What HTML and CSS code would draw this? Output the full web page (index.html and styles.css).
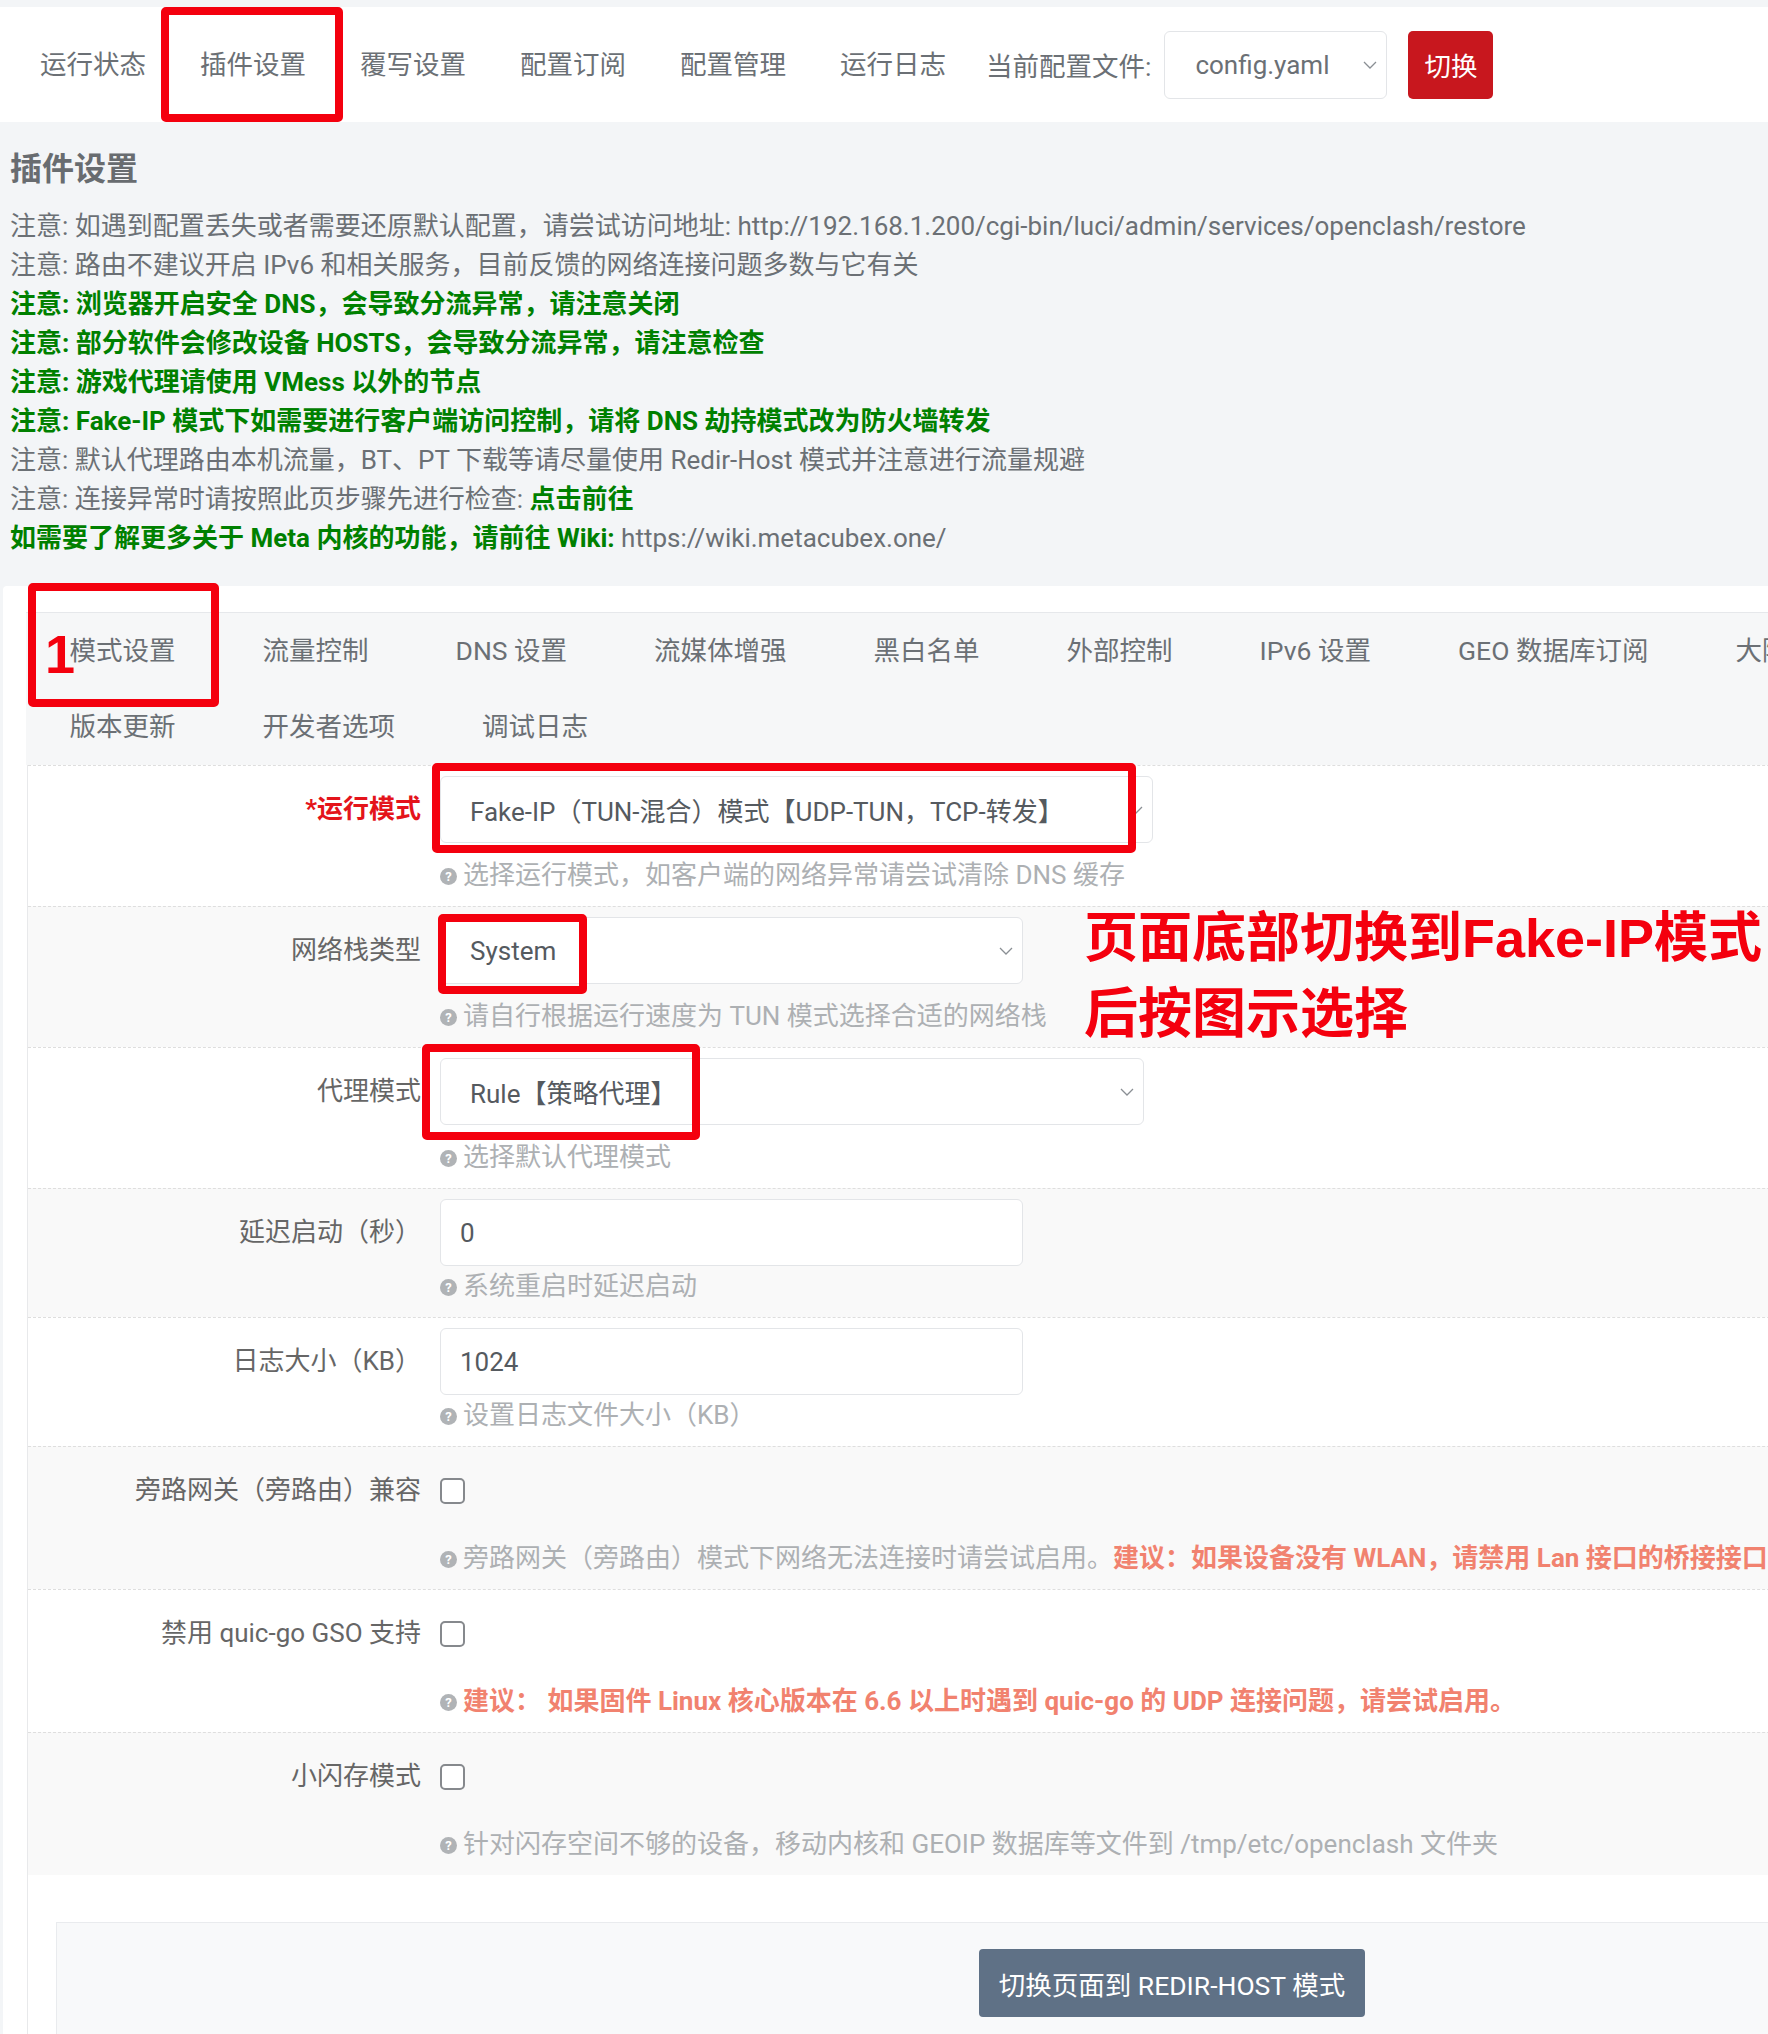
FILE: index.html
```html
<!DOCTYPE html>
<html lang="zh-CN">
<head>
    <meta charset="UTF-8">
    <title>OpenClash - 插件设置</title>
    <link rel="stylesheet" href="styles.css">
</head>
<body>
<div class="screen">
    <nav class="top-nav">
        <a>运行状态</a>
        <a class="active">插件设置</a>
        <a>覆写设置</a>
        <a>配置订阅</a>
        <a>配置管理</a>
        <a>运行日志</a>
        <span class="cfg-label">当前配置文件:</span>
        <div class="select cfg-select">
            <span>config.yaml</span>
            <svg width="14" height="8" viewBox="0 0 14 8"><path d="M1 1l6 6 6-6" fill="none" stroke="#8a8f94" stroke-width="1.3"/></svg>
        </div>
        <button class="btn-switch">切换</button>
    </nav>

    <div class="page">
        <h2>插件设置</h2>
        <div class="notes">
            <p>注意: 如遇到配置丢失或者需要还原默认配置，请尝试访问地址: http://192.168.1.200/cgi-bin/luci/admin/services/openclash/restore</p>
            <p>注意: 路由不建议开启 IPv6 和相关服务，目前反馈的网络连接问题多数与它有关</p>
            <p class="green">注意: 浏览器开启安全 DNS，会导致分流异常，请注意关闭</p>
            <p class="green">注意: 部分软件会修改设备 HOSTS，会导致分流异常，请注意检查</p>
            <p class="green">注意: 游戏代理请使用 VMess 以外的节点</p>
            <p class="green">注意: Fake-IP 模式下如需要进行客户端访问控制，请将 DNS 劫持模式改为防火墙转发</p>
            <p>注意: 默认代理路由本机流量，BT、PT 下载等请尽量使用 Redir-Host 模式并注意进行流量规避</p>
            <p>注意: 连接异常时请按照此页步骤先进行检查: <b class="green">点击前往</b></p>
            <p><b class="green">如需要了解更多关于 Meta 内核的功能，请前往 Wiki:</b> https://wiki.metacubex.one/</p>
        </div>
    </div>

    <div class="panel">
        <ul class="tabs">
            <li class="active">模式设置</li>
            <li>流量控制</li>
            <li>DNS 设置</li>
            <li>流媒体增强</li>
            <li>黑白名单</li>
            <li>外部控制</li>
            <li>IPv6 设置</li>
            <li>GEO 数据库订阅</li>
            <li>大陆白名单订阅</li>
            <li>版本更新</li>
            <li>开发者选项</li>
            <li>调试日志</li>
        </ul>

        <div class="form">
            <div class="row row-select">
                <label class="required">*运行模式</label>
                <div class="select w-long">
                    <span>Fake-IP（TUN-混合）模式【UDP-TUN，TCP-转发】</span>
                    <svg width="14" height="8" viewBox="0 0 14 8"><path d="M1 1l6 6 6-6" fill="none" stroke="#8a8f94" stroke-width="1.3"/></svg>
                </div>
                <div class="help"><i>?</i>选择运行模式，如客户端的网络异常请尝试清除 DNS 缓存</div>
            </div>
            <div class="row row-select">
                <label>网络栈类型</label>
                <div class="select w-mid">
                    <span>System</span>
                    <svg width="14" height="8" viewBox="0 0 14 8"><path d="M1 1l6 6 6-6" fill="none" stroke="#8a8f94" stroke-width="1.3"/></svg>
                </div>
                <div class="help"><i>?</i>请自行根据运行速度为 TUN 模式选择合适的网络栈</div>
            </div>
            <div class="row row-select">
                <label>代理模式</label>
                <div class="select w-rule">
                    <span>Rule【策略代理】</span>
                    <svg width="14" height="8" viewBox="0 0 14 8"><path d="M1 1l6 6 6-6" fill="none" stroke="#8a8f94" stroke-width="1.3"/></svg>
                </div>
                <div class="help"><i>?</i>选择默认代理模式</div>
            </div>
            <div class="row row-input">
                <label>延迟启动（秒）</label>
                <input class="text" value="0">
                <div class="help"><i>?</i>系统重启时延迟启动</div>
            </div>
            <div class="row row-input">
                <label>日志大小（KB）</label>
                <input class="text" value="1024">
                <div class="help"><i>?</i>设置日志文件大小（KB）</div>
            </div>
            <div class="row row-check">
                <label>旁路网关（旁路由）兼容</label>
                <div class="check-wrap"><input type="checkbox"></div>
                <div class="help"><i>?</i>旁路网关（旁路由）模式下网络无法连接时请尝试启用。<b>建议：如果设备没有 WLAN，请禁用 Lan 接口的桥接接口</b></div>
            </div>
            <div class="row row-check">
                <label>禁用 quic-go GSO 支持</label>
                <div class="check-wrap"><input type="checkbox"></div>
                <div class="help"><i>?</i><b>建议： 如果固件 Linux 核心版本在 6.6 以上时遇到 quic-go 的 UDP 连接问题，请尝试启用。</b></div>
            </div>
            <div class="row row-check">
                <label>小闪存模式</label>
                <div class="check-wrap"><input type="checkbox"></div>
                <div class="help"><i>?</i>针对闪存空间不够的设备，移动内核和 GEOIP 数据库等文件到 /tmp/etc/openclash 文件夹</div>
            </div>

            <div class="actions">
                <button class="btn-mode">切换页面到 REDIR-HOST 模式</button>
            </div>
        </div>
    </div>

    <!-- 标注 -->
    <div class="mark mark-nav"></div>
    <div class="mark mark-tab"></div>
    <div class="mark-num">1</div>
    <div class="mark mark-mode"></div>
    <div class="mark mark-stack"></div>
    <div class="mark mark-proxy"></div>
    <div class="mark-text">页面底部切换到Fake-IP模式<br>后按图示选择</div>
</div>
</body>
</html>
```

FILE: styles.css
```css
html, body {
    margin: 0;
    overflow: hidden;
    background: #f3f5f7;
}

body {
    font-family: Roboto, "Noto Sans CJK SC", sans-serif;
    font-size: 26px;
    color: #6b7075;
}

.screen {
    position: relative;
    width: 2060px;
    padding-bottom: 40px;
}

/* top nav */
.top-nav {
    display: flex;
    align-items: center;
    margin-top: 7px;
    height: 115px;
    padding-left: 13px;
    background: #fff;
    font-size: 26.5px;
}

.top-nav a {
    padding: 0 27px;
    line-height: 40px;
}

.cfg-label {
    margin-left: 13px;
}

.select {
    display: flex;
    align-items: center;
    justify-content: space-between;
    box-sizing: border-box;
    height: 67px;
    padding: 0 9px 0 29px;
    background: #fff;
    border: 1px solid #e3e5e8;
    border-radius: 6px;
    color: #555a5f;
}

.cfg-select {
    width: 223px;
    height: 68px;
    margin-left: 13px;
    padding-left: 30px;
    color: #6b7075;
    font-size: 26px;
}

.btn-switch {
    margin-left: 21px;
    width: 85px;
    height: 68px;
    border: 0;
    border-radius: 5px;
    background: #c8171e;
    color: #fff;
    font: inherit;
}

/* header + notes */
.page {
    padding: 0 10px;
}

.page h2 {
    margin: 27px 0 0;
    font-size: 32px;
    line-height: 40px;
    font-weight: 700;
    color: #686c70;
}

.notes {
    margin-top: 18px;
}

.notes p {
    margin: 0;
    line-height: 39px;
    white-space: nowrap;
}

.green {
    color: #008000;
    font-weight: 700;
}

/* panel */
.panel {
    margin: 28px 0 0 3px;
    padding-top: 26px;
    background: #fff;
    border-radius: 4px 0 0 0;
}

.tabs {
    display: flex;
    flex-wrap: wrap;
    margin: 0 0 0 23px;
    padding: 0;
    list-style: none;
    background: #f6f7f8;
    border-top: 1px solid #e6e8eb;
    font-size: 26.5px;
}

.tabs li {
    padding: 0 43.5px;
    line-height: 76px;
    white-space: nowrap;
}

.form {
    margin-left: 24px;
    border-left: 1px solid #e8e9eb;
}

.row {
    display: grid;
    grid-template-columns: 393px 1fr;
    column-gap: 19px;
    padding: 10px 0 11px;
    border-top: 1px dashed #dedede;
    background: #fff;
}

.row:nth-child(even) {
    background: #f9f9f9;
}

.row label {
    grid-row: 1;
    align-self: center;
    text-align: right;
    color: #666;
    line-height: 39px;
    white-space: nowrap;
}

.row label.required {
    color: #e4141b;
    font-weight: 700;
}

.row .select,
.row .text,
.row .check-wrap {
    grid-row: 1;
    grid-column: 2;
}

.w-long { width: 713px; }
.w-mid { width: 583px; }
.w-rule { width: 704px; }

.text {
    box-sizing: border-box;
    width: 583px;
    height: 67px;
    padding: 0 19px;
    border: 1px solid #e3e5e8;
    border-radius: 6px;
    background: #fff;
    font: inherit;
    color: #555a5f;
}

.check-wrap {
    display: flex;
    align-items: center;
    height: 67px;
}

.check-wrap input {
    appearance: none;
    margin: 0;
    width: 25px;
    height: 26px;
    border: 2px solid #86898d;
    border-radius: 5px;
    background: #fff;
}

.help {
    grid-row: 2;
    grid-column: 2;
    display: flex;
    align-items: center;
    line-height: 39px;
    color: #adb0b3;
    white-space: nowrap;
}

.row-select .help { margin-top: 13px; }
.row-input .help { margin-top: 1px; }
.row-check .help { margin-top: 15px; }

.help i {
    display: inline-block;
    width: 17px;
    height: 17px;
    margin: 2px 6px 0 0;
    border-radius: 50%;
    background: #b0b3b6;
    color: #fff;
    font-style: normal;
    font-weight: 700;
    font-size: 13px;
    line-height: 17px;
    text-align: center;
}

.help b {
    color: #f1826f;
    font-weight: 700;
}

.actions {
    margin: 47px 0 0 28px;
    padding: 26px 0 60px 922px;
    background: #f8f9fa;
    border-top: 1px solid #e9ebee;
    border-left: 1px solid #e9ebee;
}

.btn-mode {
    width: 386px;
    height: 68px;
    padding: 0;
    border: 0;
    border-radius: 4px;
    background: #5f7186;
    color: #fff;
    font: inherit;
    font-size: 26.5px;
    white-space: nowrap;
}

/* red annotations */
.mark {
    position: absolute;
    box-sizing: border-box;
    border: 8px solid #f4000e;
    border-radius: 5px;
}

.mark-nav { left: 161px; top: 0; width: 182px; height: 115px; }
.mark-tab { left: 28px; top: 576px; width: 191px; height: 124px; }
.mark-mode { left: 432px; top: 756px; width: 704px; height: 90px; }
.mark-stack { left: 438px; top: 907px; width: 149px; height: 80px; }
.mark-proxy { left: 422px; top: 1037px; width: 278px; height: 96px; }

.mark-num {
    position: absolute;
    left: 45px;
    top: 620px;
    font-family: "Liberation Sans", sans-serif;
    font-size: 54px;
    line-height: 1;
    font-weight: 700;
    color: #f4000e;
}

.mark-text {
    position: absolute;
    left: 1084px;
    top: 893px;
    font-family: "Liberation Sans", "Noto Sans CJK SC", sans-serif;
    font-size: 54px;
    line-height: 76px;
    font-weight: 700;
    color: #f4000e;
    white-space: nowrap;
}
```
